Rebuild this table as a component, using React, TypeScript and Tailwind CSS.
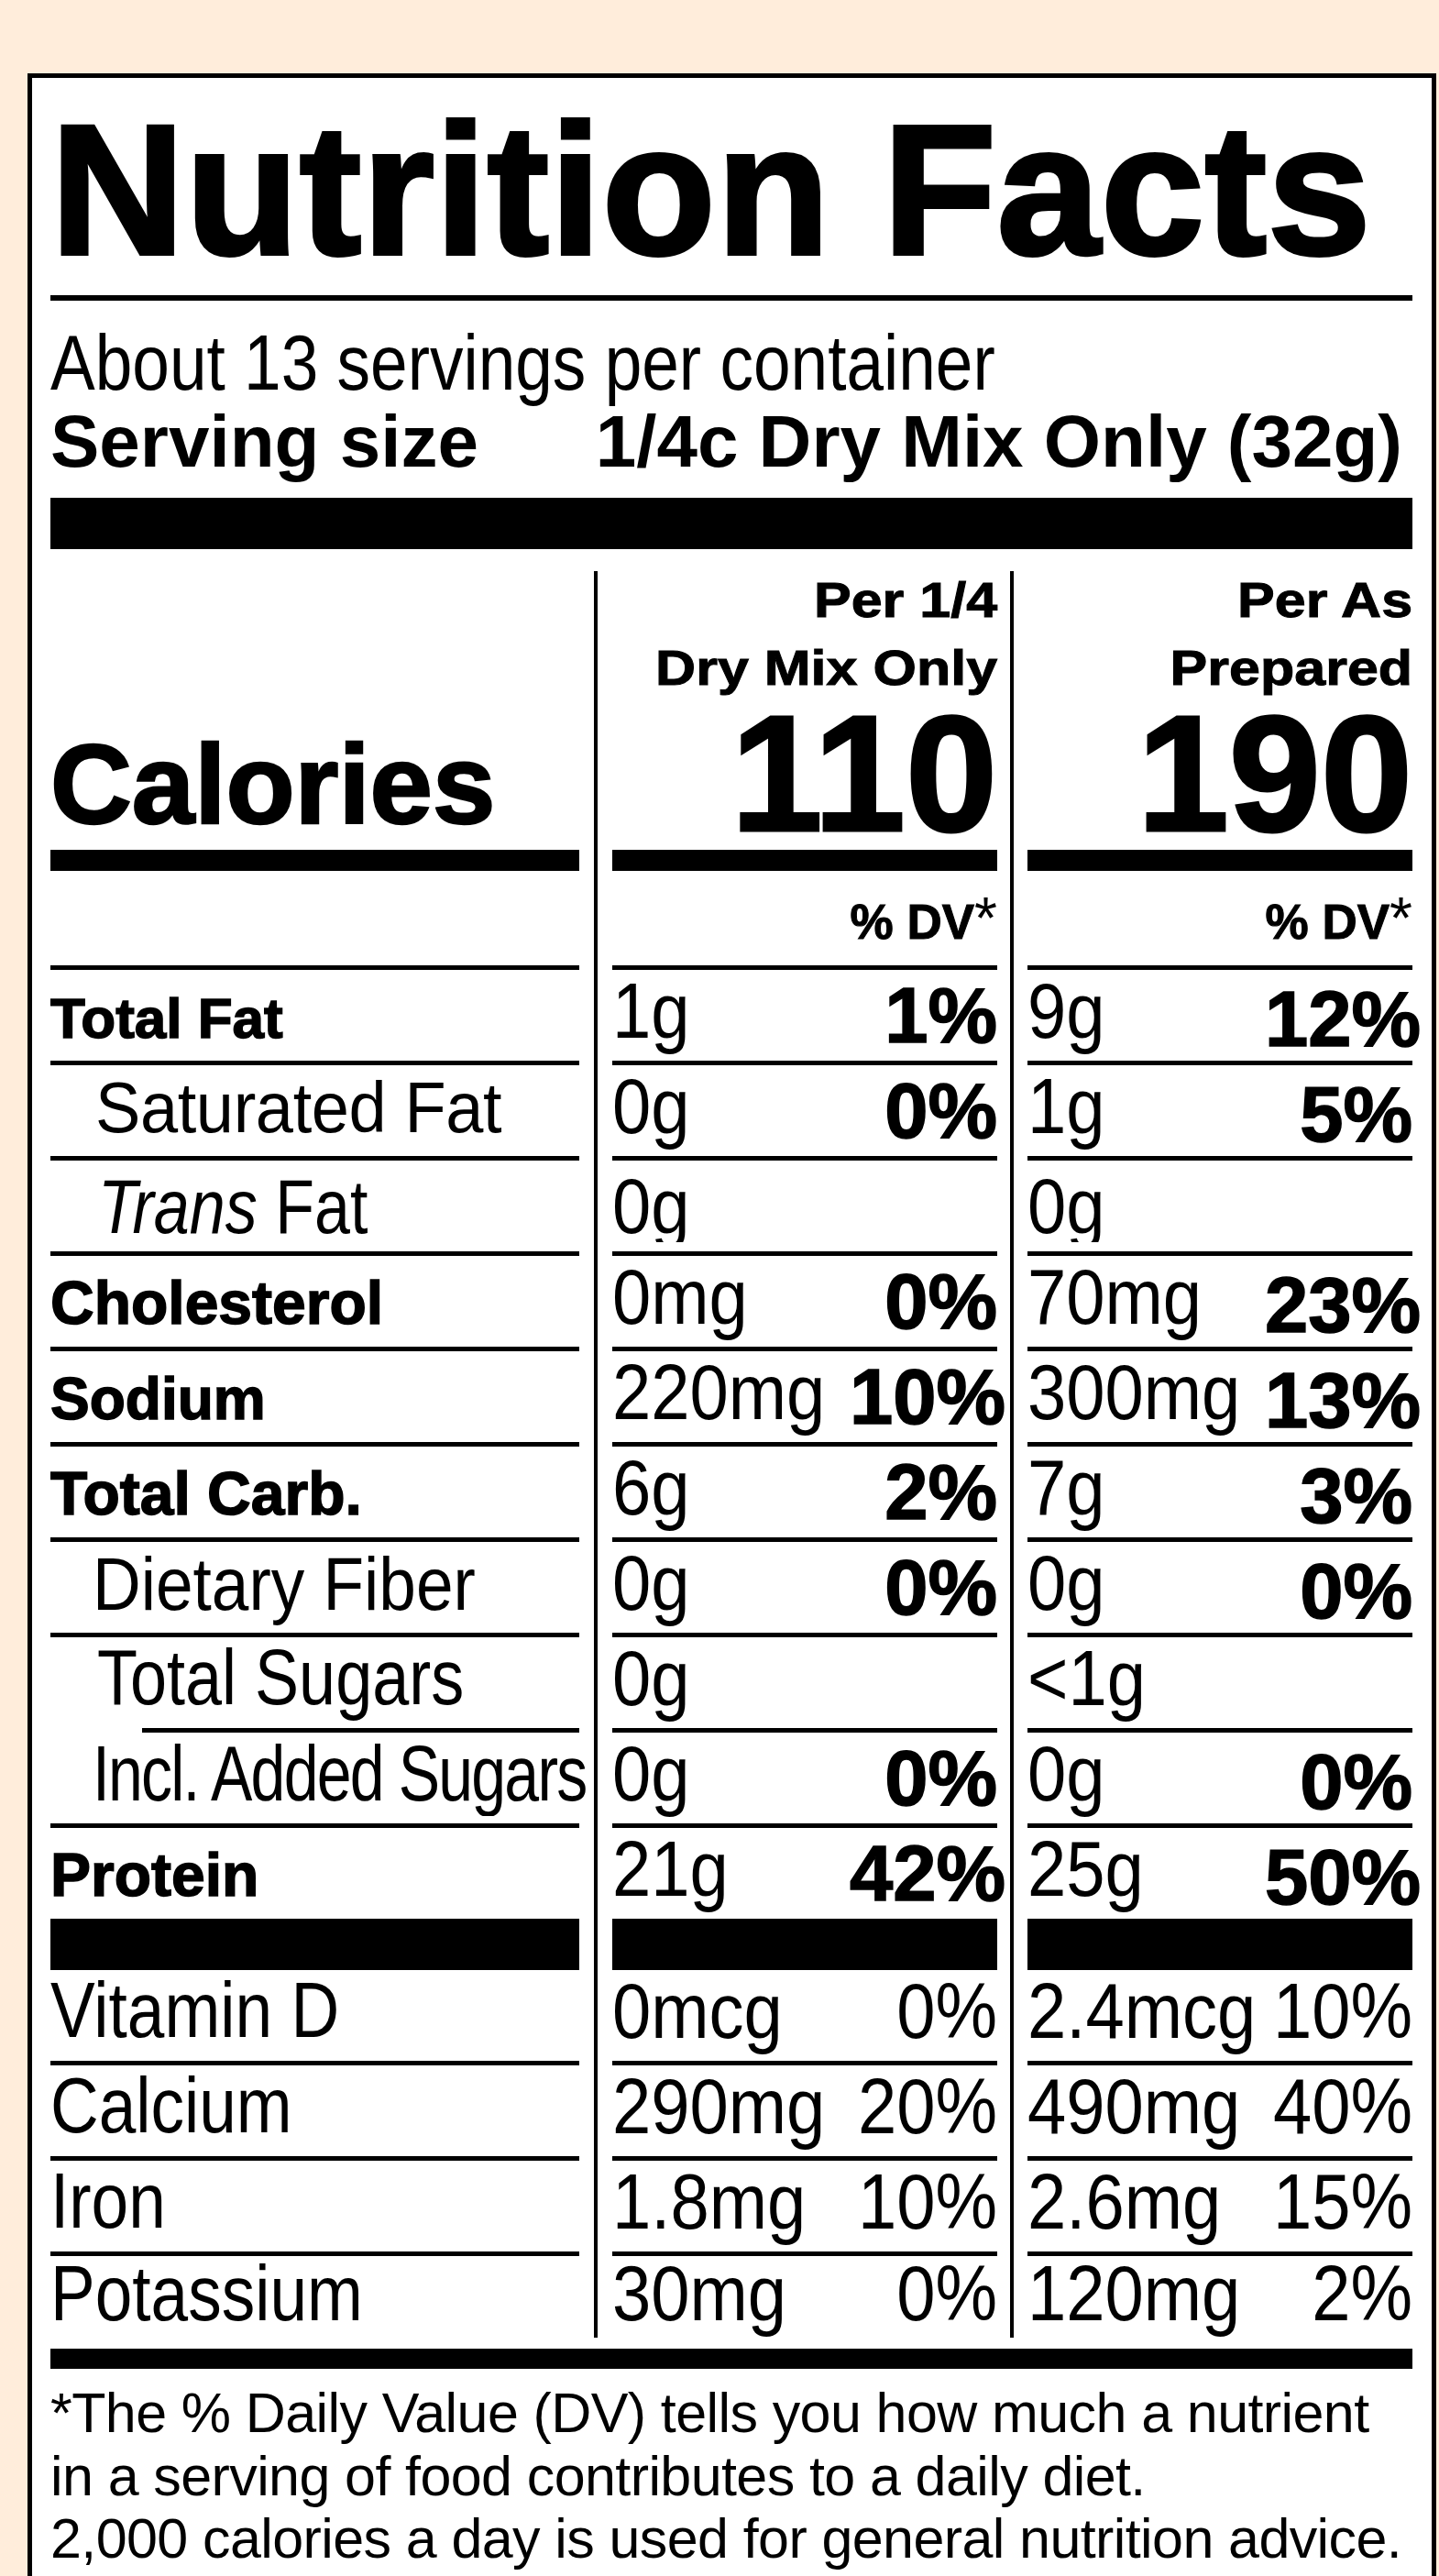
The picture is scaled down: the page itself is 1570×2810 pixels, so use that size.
import type { ReactNode } from 'react'

const SANS = "font-['Liberation_Sans',Arial,Helvetica,sans-serif]"

type Nutrient = {
  label: ReactNode
  labelCls: string
  a: string
  aPct?: string
  b: string
  bPct?: string
  low?: boolean
  clip?: boolean
  indent?: boolean
  rule?: string
}

const HEAVY = '[-webkit-text-stroke:1.5px_black]'

const MAIN: Nutrient[] = [
  { label: 'Total Fat', labelCls: `font-bold text-[62px] mb-[15px] ${HEAVY}`, a: '1g', aPct: '1%', b: '9g', bPct: '12%' },
  { label: 'Saturated Fat', labelCls: 'pl-[49px] text-[74px] tracking-[-0.4px] scale-y-[1.05] mb-[13px]', a: '0g', aPct: '0%', b: '1g', bPct: '5%' },
  {
    label: (
      <>
        <span className="italic">Trans</span> Fat
      </>
    ),
    labelCls: 'pl-[52px] text-[70px] scale-y-[1.2] mb-[7px]',
    a: '0g',
    b: '0g',
    low: true,
    clip: true,
  },
  { label: 'Cholesterol', labelCls: `font-bold text-[66px] mb-[15px] ${HEAVY}`, a: '0mg', aPct: '0%', b: '70mg', bPct: '23%' },
  { label: 'Sodium', labelCls: `font-bold text-[64px] mb-[15px] ${HEAVY}`, a: '220mg', aPct: '10%', b: '300mg', bPct: '13%' },
  { label: 'Total Carb.', labelCls: `font-bold text-[66px] mb-[15px] ${HEAVY}`, a: '6g', aPct: '2%', b: '7g', bPct: '3%' },
  { label: 'Dietary Fiber', labelCls: 'pl-[46px] text-[73px] scale-y-[1.11] mb-[13px]', a: '0g', aPct: '0%', b: '0g', bPct: '0%' },
  { label: 'Total Sugars', labelCls: 'pl-[51px] text-[72px] scale-y-[1.18] mb-[13px]', a: '0g', b: '<1g', indent: true },
  { label: 'Incl. Added Sugars', labelCls: 'pl-[46px] text-[68px] tracking-[-1.8px] scale-y-[1.25] mb-[13px]', a: '0g', aPct: '0%', b: '0g', bPct: '0%' },
  { label: 'Protein', labelCls: `font-bold text-[66px] mb-[15px] ${HEAVY}`, a: '21g', aPct: '42%', b: '25g', bPct: '50%', rule: 'h-[56px]' },
]

const VITAMINS = [
  { label: 'Vitamin D', a: '0mcg', aPct: '0%', b: '2.4mcg', bPct: '10%' },
  { label: 'Calcium', a: '290mg', aPct: '20%', b: '490mg', bPct: '40%' },
  { label: 'Iron', a: '1.8mg', aPct: '10%', b: '2.6mg', bPct: '15%' },
  { label: 'Potassium', a: '30mg', aPct: '0%', b: '120mg', bPct: '2%', last: true },
]

interface RowProps {
  h?: string
  rule?: string | null
  labelRule?: string
  labelAlign?: string
  colAlign?: string
  label?: ReactNode
  mid?: ReactNode
  right?: ReactNode
}

function Row({
  h = 'h-[99px]',
  rule = 'h-[5px]',
  labelRule = '',
  labelAlign = 'items-end',
  colAlign = 'items-end justify-between',
  label,
  mid,
  right,
}: RowProps) {
  return (
    <div className="flex">
      <div className="w-[593px] pr-[16px] flex flex-col">
        <div className={`${h} flex ${labelAlign}`}>{label}</div>
        {rule && <div className={`${rule} bg-black ${labelRule}`} />}
      </div>
      <div className="w-[454px] border-l-4 border-black pl-[16px] pr-[14px] flex flex-col">
        <div className={`${h} flex ${colAlign}`}>{mid}</div>
        {rule && <div className={`${rule} bg-black`} />}
      </div>
      <div className="w-[439px] border-l-4 border-black pl-[15px] flex flex-col">
        <div className={`${h} flex ${colAlign}`}>{right}</div>
        {rule && <div className={`${rule} bg-black`} />}
      </div>
    </div>
  )
}

function Value({ text, low, clip }: { text: string; low?: boolean; clip?: boolean }) {
  if (clip) {
    // the reference crops the descender of "g" in this row
    return (
      <div className="h-[90px] overflow-hidden flex items-end mb-[10px]">
        <span className="text-[76px] leading-none whitespace-nowrap origin-bottom scale-y-[1.12] -mb-[3px]">{text}</span>
      </div>
    )
  }
  return (
    <span className={`text-[76px] leading-none whitespace-nowrap origin-bottom scale-y-[1.12] ${low ? 'mb-[6px]' : 'mb-[12px]'}`}>
      {text}
    </span>
  )
}

function BoldPct({ text, last }: { text: string; last?: boolean }) {
  const wide = text.length > 2
  return (
    <span
      className={`font-bold text-[85px] leading-none whitespace-nowrap [-webkit-text-stroke:1.5px_black] ${
        last ? 'mb-[3px]' : 'mb-[7px]'
      } ${wide ? '-mr-[9px]' : ''}`}
    >
      {text}
    </span>
  )
}

function HeaderCol({ l1, l2, cal }: { l1: string; l2: string; cal: string }) {
  return (
    <>
      <div className="font-bold text-[54px] leading-[62px] whitespace-nowrap origin-right scale-x-[1.13] [-webkit-text-stroke:1px_black]">
        {l1}
      </div>
      <div className="mt-[12px] font-bold text-[54px] leading-[62px] whitespace-nowrap origin-right scale-x-[1.13] [-webkit-text-stroke:1px_black]">
        {l2}
      </div>
      <div className="mt-[2px] font-bold text-[180px] leading-[166px] [-webkit-text-stroke:3px_black]">{cal}</div>
    </>
  )
}

function DailyValue() {
  return (
    <span className="font-bold text-[53px] leading-none whitespace-nowrap [-webkit-text-stroke:1px_black]">
      % DV<span className="font-normal text-[64px] [-webkit-text-stroke:0px_black]">*</span>
    </span>
  )
}

export default function App() {
  return (
    <div className={`${SANS} h-[2810px] overflow-hidden bg-[#ffeddb] pt-[80px] pl-[30px] text-black`}>
      <div className="w-[1537px] border-[5px] border-black bg-white pl-[20px] pr-[21px] pt-[20px] pb-[40px]">
        <h1 className="font-bold text-[203px] leading-[203px] tracking-[0.6px] whitespace-nowrap [-webkit-text-stroke:4px_black]">
          Nutrition Facts
        </h1>
        <div className="mt-[14px] h-[6px] bg-black" />

        <div className="mt-[37px] text-[73px] leading-none origin-bottom scale-y-[1.18] whitespace-nowrap">
          About 13 servings per container
        </div>
        <div className="mt-[4px] flex justify-between font-bold text-[80px] leading-none whitespace-nowrap">
          <span>Serving size</span>
          <span className="pr-[11px]">1/4c Dry Mix Only (32g)</span>
        </div>
        <div className="mt-[21px] h-[56px] bg-black" />

        <div className="mt-[24px]">
          <Row
            h="h-[304px]"
            rule="h-[23px]"
            labelAlign="items-end pb-[10px]"
            colAlign="flex-col items-end"
            label={<span className="font-bold text-[123px] leading-none [-webkit-text-stroke:2.5px_black]">Calories</span>}
            mid={<HeaderCol l1="Per 1/4" l2="Dry Mix Only" cal="110" />}
            right={<HeaderCol l1="Per As" l2="Prepared" cal="190" />}
          />
          <Row h="h-[103px]" colAlign="items-end justify-end pb-[19px]" mid={<DailyValue />} right={<DailyValue />} />

          {MAIN.map((n) => (
            <Row
              key={n.a + n.b + String(n.labelCls)}
              rule={n.rule ?? 'h-[5px]'}
              labelRule={n.indent ? 'ml-[100px]' : ''}
              label={<span className={`leading-none whitespace-nowrap origin-bottom ${n.labelCls}`}>{n.label}</span>}
              mid={
                <>
                  <Value text={n.a} low={n.low} clip={n.clip} />
                  {n.aPct && <BoldPct text={n.aPct} />}
                </>
              }
              right={
                <>
                  <Value text={n.b} low={n.low} clip={n.clip} />
                  {n.bPct && <BoldPct text={n.bPct} last />}
                </>
              }
            />
          ))}

          {VITAMINS.map((v) => (
            <Row
              key={v.label}
              h={v.last ? 'h-[89px]' : 'h-[99px]'}
              rule={v.last ? null : 'h-[5px]'}
              label={
                <span
                  className={`text-[73px] leading-none whitespace-nowrap origin-bottom scale-y-[1.16] ${
                    v.last ? 'mb-[6px]' : 'mb-[13px]'
                  }`}
                >
                  {v.label}
                </span>
              }
              mid={
                <>
                  <Value text={v.a} low={v.last} />
                  <Value text={v.aPct} low={v.last} />
                </>
              }
              right={
                <>
                  <Value text={v.b} low={v.last} />
                  <Value text={v.bPct} low={v.last} />
                </>
              }
            />
          ))}
        </div>

        <div className="mt-[12px] h-[22px] bg-black" />
        <div className="mt-[14px] text-[61px] leading-[68.5px] tracking-[-0.6px] whitespace-nowrap">
          *The % Daily Value (DV) tells you how much a nutrient
          <br />
          in a serving of food contributes to a daily diet.
          <br />
          2,000 calories a day is used for general nutrition advice.
        </div>
      </div>
    </div>
  )
}
